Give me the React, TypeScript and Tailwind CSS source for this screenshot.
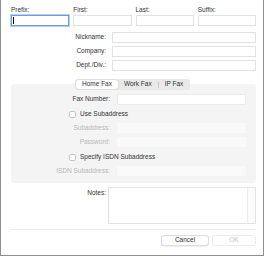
import React from 'react';

const font = "font-['Liberation_Sans',sans-serif]";

const Field = ({ className = '' }: { className?: string }) => (
  <div className={`h-[11px] border border-[#e2e2e2] bg-white ${className}`} />
);

const Row = ({ label, children }: { label: string; children: React.ReactNode }) => (
  <div className="flex items-center h-[14px]">
    <div className="w-[101px] shrink-0 text-right pr-[6px] text-[#333]">{label}</div>
    {children}
  </div>
);

const PanelRow = ({ label, dim = false, className = '', children }: { label: string; dim?: boolean; className?: string; children: React.ReactNode }) => (
  <div className={`flex items-center h-[14px] ${className}`}>
    <div className={`w-[106px] shrink-0 text-right pr-[7px] ${dim ? 'text-[#b8b8b8]' : 'text-[#333]'}`}>{label}</div>
    {children}
  </div>
);

const Check = ({ label, className = '' }: { label: string; className?: string }) => (
  <div className={`flex items-center h-[14px] pl-[58px] ${className}`}>
    <div className="w-[7px] h-[7px] shrink-0 rounded-[2px] border border-[#c8c8c8] bg-white mr-[4px]" />
    <span className="text-[#333]">{label}</span>
  </div>
);

export default function App() {
  const tabs = ['Home Fax', 'Work Fax', 'IP Fax'];
  return (
    <div className={`w-[264px] h-[256px] bg-white border-x border-b border-[#8f8f8f] ${font} text-[6.5px] leading-none`}>
      <div className="pl-[10px] pr-[7px] pt-[7px]">
        {/* name row */}
        <div className="grid grid-cols-4 gap-x-[4px]">
          {['Prefix:', 'First:', 'Last:', 'Suffix:'].map((l, i) => (
            <div key={l} className="flex flex-col">
              <span className="text-[#333] h-[8px]">{l}</span>
              {i === 0 ? (
                <div className="h-[11px] border border-[#6f9be0] ring-1 ring-[#b9cff0] bg-white flex items-center pl-[1px]">
                  <div className="w-px h-[7px] bg-black" />
                </div>
              ) : (
                <Field />
              )}
            </div>
          ))}
        </div>

        <div className="mt-[4px]">
          <Row label="Nickname:"><Field className="flex-1" /></Row>
          <Row label="Company:"><Field className="flex-1" /></Row>
          <Row label="Dept./Div.:"><Field className="flex-1" /></Row>
        </div>

        {/* fax panel */}
        <div className="relative mt-[12px] bg-[#f4f4f4] rounded-[3px] pt-[8px] pb-[5px]">
          <div className="absolute -top-[5px] left-[64px] flex items-center h-[11px] rounded-[3px] bg-[#e9e9e9] p-px">
            {tabs.map((t, i) => (
              <div key={t} className="flex items-center">
                <div className={`h-[9px] flex items-center px-[6px] rounded-[2px] text-[#333] ${i === 0 ? 'bg-white shadow-[0_0_1px_rgba(0,0,0,0.35)]' : ''}`}>
                  {t}
                </div>
                {i === 1 && <div className="w-px h-[6px] bg-[#c8c8c8]" />}
              </div>
            ))}
          </div>
          <PanelRow label="Fax Number:"><Field className="w-[129px] border-[#ececec]" /></PanelRow>
          <Check label="Use Subaddress" className="mt-px" />
          <PanelRow label="Subaddress:" dim><div className="w-[129px] h-[10px] bg-[#f9f9f9]" /></PanelRow>
          <PanelRow label="Password:" dim><div className="w-[129px] h-[10px] bg-[#f9f9f9]" /></PanelRow>
          <Check label="Specify ISDN Subaddress" className="mt-px" />
          <PanelRow label="ISDN Subaddress:" dim><div className="w-[129px] h-[10px] bg-[#f9f9f9]" /></PanelRow>
        </div>

        {/* notes */}
        <div className="flex mt-[4px]">
          <div className="w-[97px] shrink-0 text-right pr-[2px] pt-[3px] text-[#333]">Notes:</div>
          <div className="flex-1 h-[37px] border border-[#e2e2e2] bg-white flex justify-end">
            <div className="w-[8px] border-l border-[#ececec] bg-[#fbfbfb]" />
          </div>
        </div>

        <div className="mt-[5px] h-px bg-[#ececec]" />

        <div className="flex justify-end gap-[3px] mt-[5px]">
          <div className="w-[48px] h-[11px] rounded-[3px] border border-[#dcdcdc] bg-white shadow-[0_0.5px_0.5px_rgba(0,0,0,0.1)] flex items-center justify-center text-[#333]">Cancel</div>
          <div className="w-[44px] h-[11px] rounded-[3px] border border-[#ececec] bg-white flex items-center justify-center text-[#c4c4c4]">OK</div>
        </div>
      </div>
    </div>
  );
}
